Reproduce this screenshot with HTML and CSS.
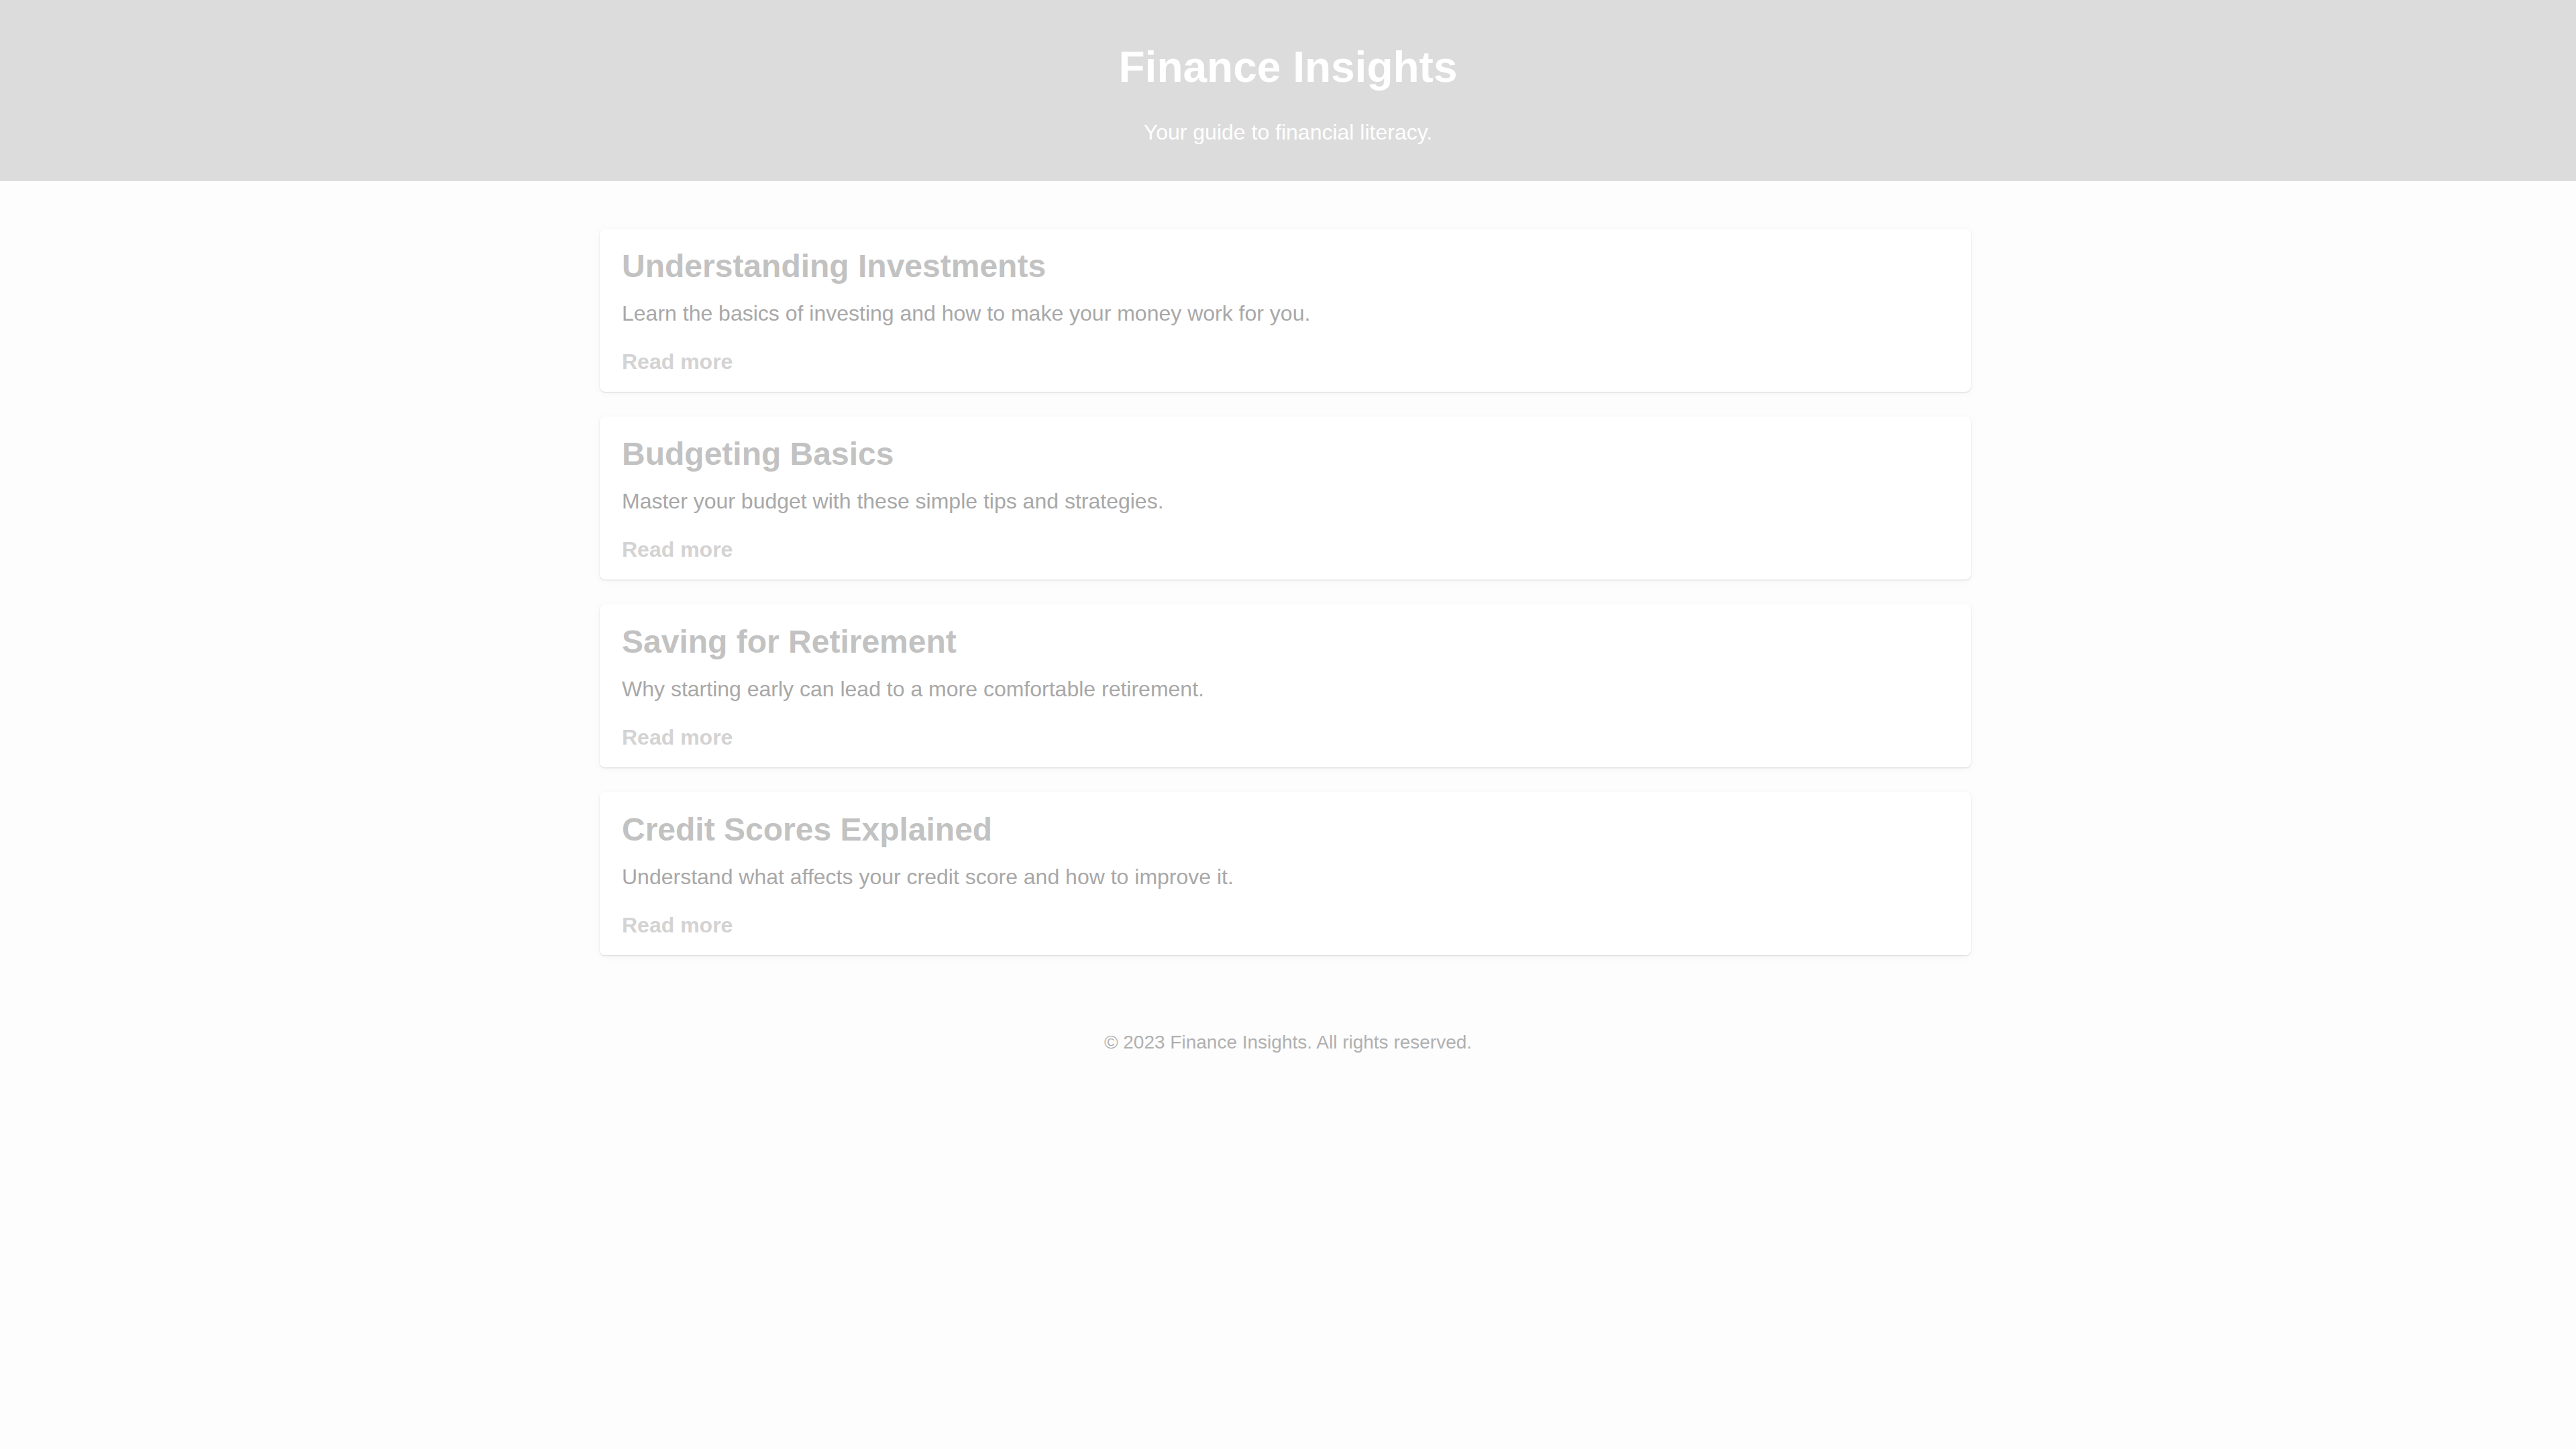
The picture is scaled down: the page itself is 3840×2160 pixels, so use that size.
FILE: index.html
```html
<!DOCTYPE html>
<html lang="en">
<head>
<meta charset="utf-8">
<title>Finance Insights</title>
<link rel="stylesheet" href="styles.css">
</head>
<body>
<header class="site-header">
  <h1 class="site-title">Finance Insights</h1>
  <p class="site-tagline">Your guide to financial literacy.</p>
</header>
<main class="articles">
  <article class="card">
    <h2 class="card-title">Understanding Investments</h2>
    <p class="card-text">Learn the basics of investing and how to make your money work for you.</p>
    <a class="card-link" href="#">Read more</a>
  </article>
  <article class="card">
    <h2 class="card-title">Budgeting Basics</h2>
    <p class="card-text">Master your budget with these simple tips and strategies.</p>
    <a class="card-link" href="#">Read more</a>
  </article>
  <article class="card">
    <h2 class="card-title">Saving for Retirement</h2>
    <p class="card-text">Why starting early can lead to a more comfortable retirement.</p>
    <a class="card-link" href="#">Read more</a>
  </article>
  <article class="card">
    <h2 class="card-title">Credit Scores Explained</h2>
    <p class="card-text">Understand what affects your credit score and how to improve it.</p>
    <a class="card-link" href="#">Read more</a>
  </article>
</main>
<footer class="site-footer">
  <p class="copyright">&copy; 2023 Finance Insights. All rights reserved.</p>
</footer>
</body>
</html>
```
FILE: styles.css
```css
* { box-sizing: border-box; }

html, body {
  margin: 0;
  padding: 0;
}

body {
  background: #fdfdfd;
  font-family: "Liberation Sans", Arial, sans-serif;
  line-height: normal;
  min-height: 2160px;
}

.site-header {
  background: #dcdcdc;
  color: #ffffff;
  text-align: center;
  padding: 63px 20px 54px;
}

.site-title {
  margin: 0;
  font-size: 64px;
  font-weight: bold;
}

.site-tagline {
  margin: 42px 0 0;
  font-size: 32px;
}

.articles {
  width: 2044px;
  margin-left: calc(50% - 1026px);
  padding-top: 71px;
  display: flex;
  flex-direction: column;
  gap: 37px;
}

.card {
  background: #ffffff;
  border-radius: 8px;
  padding: 28px 33px 26px;
  box-shadow: 0 1px 2px rgba(0, 0, 0, 0.14), 0 2px 14px rgba(0, 0, 0, 0.035);
}

.card-title {
  margin: 0 0 25px;
  font-size: 48px;
  font-weight: bold;
  color: #c2c2c2;
}

.card-text {
  margin: 0 0 35px;
  font-size: 32px;
  color: #a8a8a8;
}

.card-link {
  display: block;
  font-size: 32px;
  font-weight: bold;
  color: #d3d3d3;
  text-decoration: none;
}

.site-footer {
  margin-top: 114px;
  text-align: center;
}

.copyright {
  margin: 0;
  font-size: 28px;
  color: #b0b0b0;
}
```
